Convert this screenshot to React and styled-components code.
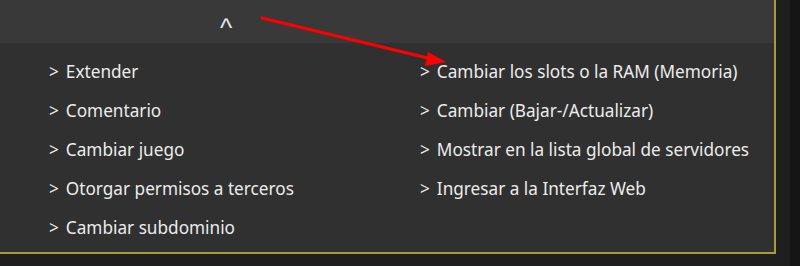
import React from 'react';
import styled, { createGlobalStyle } from 'styled-components';

const GlobalStyle = createGlobalStyle`
  html, body {
    margin: 0;
    padding: 0;
    background-color: #1f1f1f;
  }
  body {
    font-family: "Noto Sans", "Open Sans", sans-serif;
  }
`;

const Page = styled.div`
  position: relative;
  display: flex;
  width: 800px;
  height: 266px;
  overflow: hidden;
  background-color: #1f1f1f;
`;

const Panel = styled.div`
  width: 774px;
  height: 252px;
  display: flex;
  flex-direction: column;
  background-color: #303030;
  border-right: 2px solid #a89b3c;
  border-bottom: 2px solid #a89b3c;
`;

const Scrollbar = styled.div`
  margin-left: auto;
  width: 10px;
  background-color: #151515;
`;

const Header = styled.div`
  height: 43px;
  display: flex;
  align-items: center;
  justify-content: flex-start;
  padding-left: 220px;
  background-color: #393939;
`;

const Caret = styled.span`
  font-family: "Liberation Sans", Arial, sans-serif;
  font-size: 26px;
  color: #e6e6e6;
  line-height: 1;
  margin-top: 12px;
`;

const List = styled.div`
  display: grid;
  grid-template-columns: 371px 1fr;
  grid-auto-flow: column;
  grid-template-rows: repeat(5, 39px);
  padding: 9px 0 0 49px;
`;

const Item = styled.div`
  display: flex;
  align-items: center;
  font-size: 17.2px;
  color: #ececec;
  white-space: nowrap;
  cursor: pointer;
`;

const Chevron = styled.span`
  margin-right: 7px;
`;

const Arrow = styled.svg`
  position: absolute;
  left: 0;
  top: 0;
  pointer-events: none;
`;

const leftItems = [
  'Extender',
  'Comentario',
  'Cambiar juego',
  'Otorgar permisos a terceros',
  'Cambiar subdominio',
];

const rightItems = [
  'Cambiar los slots o la RAM (Memoria)',
  'Cambiar (Bajar-/Actualizar)',
  'Mostrar en la lista global de servidores',
  'Ingresar a la Interfaz Web',
];

export default function App() {
  return (
    <>
      <GlobalStyle />
      <Page>
        <Panel>
          <Header>
            <Caret>^</Caret>
          </Header>
          <List>
            {leftItems.map((t) => (
              <Item key={t}><Chevron>&gt;</Chevron>{t}</Item>
            ))}
            {rightItems.map((t) => (
              <Item key={t}><Chevron>&gt;</Chevron>{t}</Item>
            ))}
          </List>
        </Panel>
        <Scrollbar />
        <Arrow width="800" height="266" viewBox="0 0 800 266">
          <line x1="262" y1="18" x2="432" y2="59" stroke="#ff0000" strokeWidth="3.2" strokeLinecap="round" />
          <polygon points="446,62 428,52 425,66" fill="#ff0000" />
        </Arrow>
      </Page>
    </>
  );
}
